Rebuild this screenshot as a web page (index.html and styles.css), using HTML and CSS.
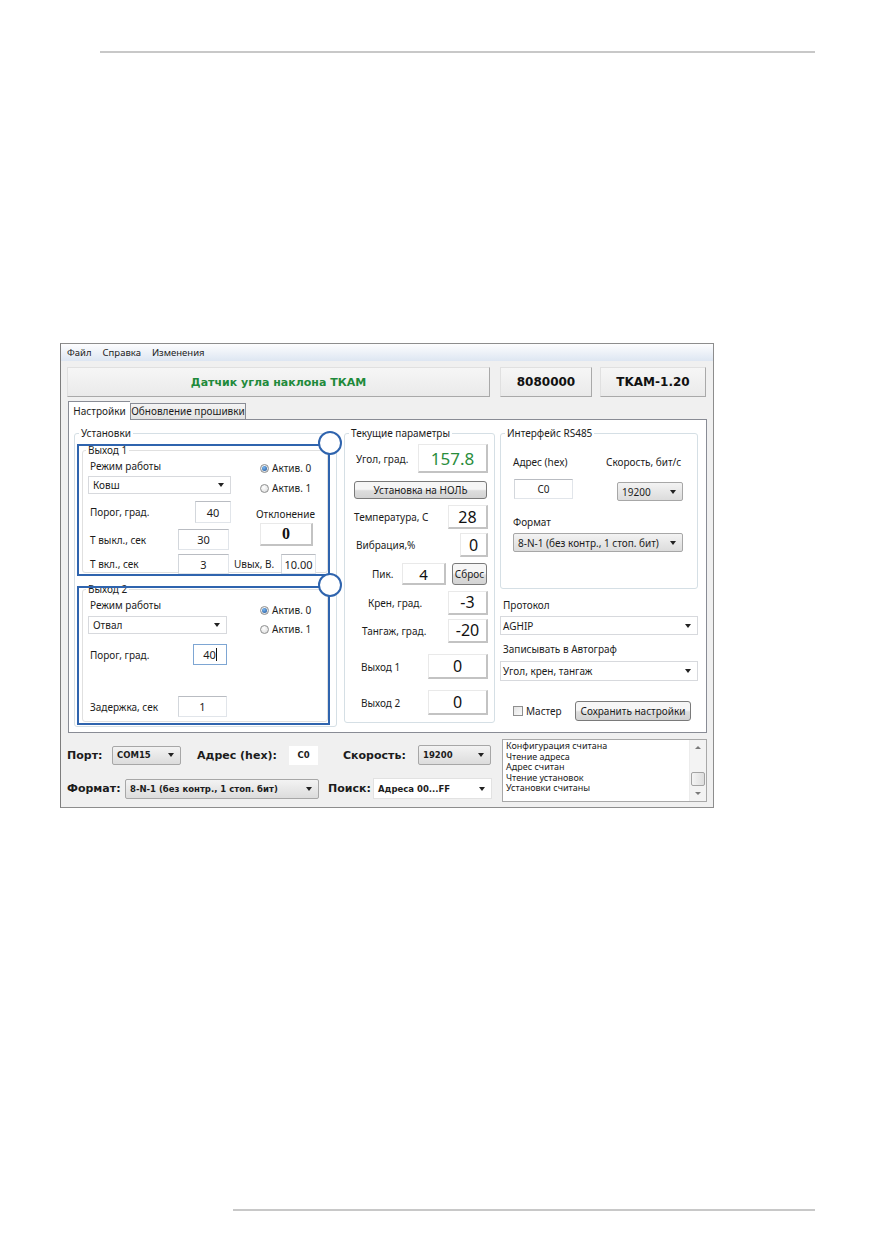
FILE: index.html
```html
<!DOCTYPE html>
<html lang="ru">
<head>
    <meta charset="UTF-8">
    <meta name="viewport" content="width=device-width, initial-scale=1.0">
    <title>Датчик угла наклона ТКАМ</title>
    <link rel="stylesheet" href="styles.css">
</head>
<body>
<div class="page">
    <div class="rule rule-top"></div>

    <div class="window">
        <div class="menubar">
            <span>Файл</span><span>Справка</span><span>Изменения</span>
        </div>

        <div class="head-row">
            <div class="hbtn hbtn-title">Датчик угла наклона ТКАМ</div>
            <div class="hbtn hbtn-serial">8080000</div>
            <div class="hbtn hbtn-version">TKAM-1.20</div>
        </div>

        <div class="tabs">
            <div class="tab active">Настройки</div>
            <div class="tab">Обновление прошивки</div>
        </div>

        <div class="tab-panel">
            <!-- Установки -->
            <div class="group g-settings">
                <span class="gtitle">Установки</span>

                <div class="out out1">
                    <span class="out-title">Выход 1</span>
                    <span class="pin"></span>
                    <div class="o-left o1-left">
                        <div class="lbl row-lbl">Режим работы</div>
                        <div class="combo o1-combo">Ковш</div>
                        <div class="frow o1-thr"><span class="lbl">Порог, град.</span><span class="edit">40</span></div>
                        <div class="frow o1-toff"><span class="lbl">Т выкл., сек</span><span class="edit">30</span></div>
                        <div class="frow o1-ton"><span class="lbl">Т вкл., сек</span><span class="edit">3</span></div>
                    </div>
                    <div class="o-right o1-right">
                        <div class="radio on"><span class="dot"></span>Актив. 0</div>
                        <div class="radio r2"><span class="dot"></span>Актив. 1</div>
                        <div class="lbl dev-lbl">Отклонение</div>
                        <div class="val dev-val">0</div>
                        <div class="frow uout"><span class="lbl">Uвых, В.</span><span class="edit">10.00</span></div>
                    </div>
                </div>

                <div class="out out2">
                    <span class="out-title">Выход 2</span>
                    <span class="pin"></span>
                    <div class="o-left o2-left">
                        <div class="lbl row-lbl">Режим работы</div>
                        <div class="combo o2-combo">Отвал</div>
                        <div class="frow o2-thr"><span class="lbl">Порог, град.</span><span class="edit focus">40<i class="caret"></i></span></div>
                        <div class="frow o2-delay"><span class="lbl">Задержка, сек</span><span class="edit">1</span></div>
                    </div>
                    <div class="o-right o2-right">
                        <div class="radio on"><span class="dot"></span>Актив. 0</div>
                        <div class="radio r2"><span class="dot"></span>Актив. 1</div>
                    </div>
                </div>
            </div>

            <!-- Текущие параметры -->
            <div class="group g-current">
                <span class="gtitle">Текущие параметры</span>
                <div class="prow p-angle"><span class="lbl">Угол, град.</span><span class="val big">157.8</span></div>
                <div class="btn zero-btn">Установка на НОЛЬ</div>
                <div class="prow p-temp"><span class="lbl">Температура, С</span><span class="val">28</span></div>
                <div class="prow p-vib"><span class="lbl">Вибрация,%</span><span class="val">0</span></div>
                <div class="prow p-peak"><span class="lbl">Пик.</span><span class="val">4</span><span class="btn reset-btn">Сброс</span></div>
                <div class="prow p-roll"><span class="lbl">Крен, град.</span><span class="val">-3</span></div>
                <div class="prow p-pitch"><span class="lbl">Тангаж, град.</span><span class="val">-20</span></div>
                <div class="prow p-out1"><span class="lbl">Выход 1</span><span class="val">0</span></div>
                <div class="prow p-out2"><span class="lbl">Выход 2</span><span class="val">0</span></div>
            </div>

            <!-- Интерфейс RS485 и протокол -->
            <div class="right-col">
                <div class="group g-rs485">
                    <span class="gtitle">Интерфейс RS485</span>
                    <div class="rs-labels"><span class="lbl">Адрес (hex)</span><span class="lbl">Скорость, бит/с</span></div>
                    <div class="rs-inputs"><span class="edit rs-addr">C0</span><span class="combo grey rs-speed">19200</span></div>
                    <div class="lbl rs-fmt-lbl">Формат</div>
                    <div class="combo grey rs-fmt">8-N-1 (без контр., 1 стоп. бит)</div>
                </div>
                <div class="lbl proto-lbl">Протокол</div>
                <div class="combo wide proto-combo">AGHIP</div>
                <div class="lbl write-lbl">Записывать в Автограф</div>
                <div class="combo wide write-combo">Угол, крен, тангаж</div>
                <div class="save-row">
                    <span class="check"></span><span class="lbl">Мастер</span>
                    <span class="btn save-btn">Сохранить настройки</span>
                </div>
            </div>
        </div>

        <div class="bottom">
            <div class="bottom-left">
                <div class="brow">
                    <span class="blbl w45">Порт:</span>
                    <span class="combo grey bold b-port">COM15</span>
                    <span class="blbl w92 ml16">Адрес (hex):</span>
                    <span class="bedit">C0</span>
                    <span class="blbl w75 ml25">Скорость:</span>
                    <span class="combo grey bold b-speed">19200</span>
                </div>
                <div class="brow">
                    <span class="blbl w58">Формат:</span>
                    <span class="combo grey bold b-fmt">8-N-1 (без контр., 1 стоп. бит)</span>
                    <span class="blbl w45 ml9">Поиск:</span>
                    <span class="combo bold b-search">Адреса 00...FF</span>
                </div>
            </div>
            <div class="log">
                <div class="log-lines">
                    <div>Конфигурация считана</div>
                    <div>Чтение адреса</div>
                    <div>Адрес считан</div>
                    <div>Чтение установок</div>
                    <div>Установки считаны</div>
                </div>
                <div class="scroll">
                    <span class="sc-btn"><i class="tri-up"></i></span>
                    <span class="sc-track"><span class="sc-thumb"></span></span>
                    <span class="sc-btn"><i class="tri-down"></i></span>
                </div>
            </div>
        </div>
    </div>

    <div class="rule rule-bottom"></div>
</div>
</body>
</html>
```

FILE: styles.css
```css
* {
    box-sizing: border-box;
}
body {
    margin: 0;
    background: #fff;
    font-family: "Noto Sans", "Open Sans", sans-serif;
    font-size: 10px;
    color: #1c1c1c;
}
.page {
    padding-top: 51px;
}
.rule {
    height: 2px;
    background: #c8c8c8;
}
.rule-top {
    margin-left: 100px;
    width: 715px;
}
.rule-bottom {
    margin-left: 233px;
    width: 582px;
    margin-top: 401px;
}

/* окно программы */
.window {
    margin: 290px 0 0 60px;
    width: 654px;
    height: 465px;
    border: 1px solid #8d8d8d;
    border-left-color: #7d7d7d;
    background: #f0f0f0;
}
.menubar {
    display: flex;
    gap: 11px;
    height: 17px;
    line-height: 17px;
    padding-left: 6px;
    font-size: 9.5px;
    background: linear-gradient(#fdfdfe, #dde6f2);
}
.head-row {
    display: flex;
    height: 30px;
    margin-top: 6px;
    padding-left: 6px;
}
.hbtn {
    display: flex;
    align-items: center;
    justify-content: center;
    height: 30px;
    border: 1px solid;
    border-color: #e0e0e0 #a9a9a9 #a9a9a9 #e0e0e0;
    background: linear-gradient(#f6f6f6, #eaeaea);
    font-family: "DejaVu Sans", sans-serif;
    font-weight: bold;
    font-size: 12px;
    color: #111;
}
.hbtn-title {
    width: 423px;
    font-size: 11px;
    color: #1f8a3b;
}
.hbtn-serial {
    width: 92px;
    margin-left: 10px;
}
.hbtn-version {
    width: 106px;
    margin-left: 8px;
}

/* вкладки */
.tabs {
    display: flex;
    align-items: flex-end;
    height: 18px;
    margin-top: 4px;
    padding-left: 7px;
}
.tab {
    width: 116px;
    height: 16px;
    line-height: 15px;
    text-align: center;
    border: 1px solid #898c95;
    border-bottom: none;
    background: linear-gradient(#f4f4f4, #e2e2e2);
}
.tab.active {
    width: 62px;
    height: 19px;
    line-height: 18px;
    margin-bottom: -1px;
    border-right: none;
    background: #fff;
    position: relative;
    z-index: 1;
}
.tab-panel {
    display: flex;
    align-items: flex-start;
    margin-left: 7px;
    width: 639px;
    height: 314px;
    padding-left: 5px;
    border: 1px solid #898c95;
    background: #fff;
}

/* группы */
.group {
    position: relative;
    margin-top: 13px;
    border: 1px solid #d5dfe5;
    border-radius: 3px;
}
.gtitle {
    position: absolute;
    top: -7px;
    left: 4px;
    padding: 0 2px;
    line-height: 13px;
    background: #fff;
}
.lbl {
    line-height: 12px;
    white-space: nowrap;
}
.g-settings {
    width: 263px;
    height: 294px;
    padding: 10px 0 0 2px;
}

/* выходы с синей рамкой */
.out {
    position: relative;
    display: flex;
    align-items: flex-start;
    width: 253px;
    padding-left: 11px;
}
.out1 {
    height: 132px;
}
.out2 {
    height: 139px;
    margin-top: 10px;
}
.out::before {
    content: "";
    position: absolute;
    left: 5px;
    right: 2px;
    top: 6px;
    bottom: 3px;
    border: 1px solid #e0e0e0;
    border-radius: 3px;
}
.out2::before {
    top: 3px;
}
.out::after {
    content: "";
    position: absolute;
    inset: 0;
    border: 2px solid #2f64ae;
    z-index: 2;
    pointer-events: none;
}
.out-title {
    position: absolute;
    left: 9px;
    top: 0;
    padding: 0 2px;
    line-height: 12px;
    background: #fff;
    z-index: 1;
}
.out2 .out-title {
    top: -3px;
}
.pin {
    position: absolute;
    top: -13px;
    right: -12px;
    width: 24px;
    height: 24px;
    border: 2px solid #2f64ae;
    border-radius: 50%;
    background: #fff;
    z-index: 3;
}
.o-left,
.o-right {
    position: relative;
    z-index: 1;
    display: flex;
    flex-direction: column;
}
.o1-left {
    width: 143px;
    margin-top: 16px;
}
.o2-left {
    width: 139px;
    margin-top: 13px;
}
.row-lbl {
    margin-left: 2px;
}
.frow {
    display: flex;
    align-items: center;
    justify-content: space-between;
}
.frow .lbl {
    margin-left: 2px;
}
.o1-combo {
    margin-top: 4px;
    height: 18px;
}
.o1-thr {
    margin-top: 7px;
    height: 22px;
}
.o1-thr .edit {
    width: 36px;
    height: 22px;
}
.o1-toff {
    margin-top: 6px;
    height: 21px;
}
.o1-toff .edit {
    width: 51px;
    height: 21px;
    margin-right: 2px;
}
.o1-ton {
    margin-top: 4px;
    height: 20px;
}
.o1-ton .edit {
    width: 51px;
    height: 20px;
    margin-right: 2px;
}
.o1-right {
    width: 83px;
    margin-left: 3px;
    margin-top: 18px;
}
.o1-right .radio {
    margin-left: 26px;
}
.o1-right .r2 {
    margin-top: 8px;
}
.dev-lbl {
    margin-top: 14px;
    margin-left: 22px;
}
.dev-val {
    margin-top: 3px;
    margin-left: 26px;
    width: 53px;
    height: 23px;
    font-family: "Liberation Serif", serif;
    font-weight: bold;
    font-size: 13px;
}
.uout {
    margin-top: 8px;
    height: 20px;
    width: 82px;
}
.uout .lbl {
    margin-left: 0;
}
.uout .edit {
    width: 35px;
    height: 20px;
}
.o2-combo {
    margin-top: 5px;
    height: 18px;
}
.o2-thr {
    margin-top: 10px;
    height: 21px;
}
.o2-thr .edit {
    width: 34px;
    height: 21px;
}
.o2-delay {
    margin-top: 31px;
    height: 21px;
}
.o2-delay .edit {
    width: 49px;
    height: 21px;
}
.o2-right {
    margin-left: 33px;
    margin-top: 18px;
}
.o2-right .r2 {
    margin-top: 7px;
}

/* элементы управления */
.edit {
    display: flex;
    align-items: center;
    justify-content: center;
    background: #fff;
    border: 1px solid;
    border-color: #b9bcc2 #e1e5ea #e1e5ea #d3d7dc;
    font-size: 11px;
}
.edit.focus {
    border-color: #7ea6d3;
}
.caret {
    display: inline-block;
    width: 1px;
    height: 13px;
    background: #111;
}
.combo {
    position: relative;
    display: flex;
    align-items: center;
    padding-left: 4px;
    background: #fff;
    border: 1px solid #d7d9dd;
    white-space: nowrap;
}
.combo::after {
    content: "";
    position: absolute;
    right: 6px;
    top: 50%;
    margin-top: -2px;
    border-left: 3px solid transparent;
    border-right: 3px solid transparent;
    border-top: 4px solid #222;
}
.combo.grey {
    background: linear-gradient(#f3f3f3, #dcdcdc);
    border-color: #a7a7a7;
    border-radius: 2px;
}
.radio {
    display: flex;
    align-items: center;
    height: 12px;
    white-space: nowrap;
}
.radio .dot {
    position: relative;
    width: 9px;
    height: 9px;
    margin-right: 3px;
    border: 1px solid #8e8f8f;
    border-radius: 50%;
    background: radial-gradient(circle at 40% 35%, #fff, #d8d8d8);
}
.radio.on .dot::after {
    content: "";
    position: absolute;
    inset: 1px;
    border-radius: 50%;
    background: radial-gradient(circle at 40% 35%, #7ab8f2, #1c4f94);
}
.btn {
    display: flex;
    align-items: center;
    justify-content: center;
    border: 1px solid #7a7a7a;
    border-radius: 3px;
    background: linear-gradient(#f6f6f6 45%, #dddddd 55%, #d3d3d3);
    white-space: nowrap;
}
.val {
    display: flex;
    align-items: center;
    justify-content: center;
    background: #fff;
    border-style: solid;
    border-width: 1px 2px 2px 1px;
    border-color: #e9e9e9 #c3c3c3 #c3c3c3 #e9e9e9;
    font-size: 16px;
    color: #111;
}
.val.big {
    font-size: 17px;
    color: #2a8d3c;
}

/* текущие параметры */
.g-current {
    display: flex;
    flex-direction: column;
    width: 151px;
    height: 290px;
    margin-left: 7px;
    padding-right: 6px;
}
.prow {
    display: flex;
    align-items: center;
    justify-content: space-between;
}
.p-angle {
    margin-top: 10px;
    height: 29px;
}
.p-angle .lbl {
    margin-left: 11px;
}
.p-angle .val {
    width: 70px;
    height: 29px;
}
.zero-btn {
    margin-top: 8px;
    margin-left: 9px;
    width: 133px;
    height: 18px;
}
.p-temp {
    margin-top: 6px;
    height: 24px;
}
.p-temp .lbl {
    margin-left: 9px;
}
.p-vib {
    margin-top: 4px;
    height: 24px;
}
.p-vib .lbl {
    margin-left: 11px;
}
.p-vib .val {
    width: 28px;
    height: 24px;
}
.p-temp .val,
.p-roll .val,
.p-pitch .val {
    width: 40px;
    height: 24px;
}
.p-peak {
    justify-content: flex-start;
    margin-top: 6px;
    height: 22px;
}
.p-peak .lbl {
    width: 30px;
    margin-left: 27px;
}
.p-peak .val {
    width: 44px;
    height: 22px;
    font-size: 15px;
}
.reset-btn {
    margin-left: 6px;
    width: 35px;
    height: 22px;
}
.p-roll {
    margin-top: 5px;
    height: 25px;
}
.p-roll .lbl {
    margin-left: 23px;
}
.p-pitch {
    margin-top: 3px;
    height: 25px;
}
.p-pitch .lbl {
    margin-left: 17px;
}
.p-out1,
.p-out2 {
    margin-top: 11px;
    height: 25px;
}
.p-out1 .lbl,
.p-out2 .lbl {
    margin-left: 16px;
}
.p-out1 .val,
.p-out2 .val {
    width: 60px;
    height: 25px;
}

/* правая колонка */
.right-col {
    display: flex;
    flex-direction: column;
    width: 198px;
    margin-left: 5px;
    margin-top: 13px;
}
.g-rs485 {
    margin-top: 0;
    width: 198px;
    height: 156px;
}
.rs-labels {
    display: flex;
    margin-top: 22px;
    padding-left: 12px;
}
.rs-labels .lbl:first-child {
    width: 93px;
}
.rs-inputs {
    display: flex;
    align-items: flex-start;
    margin-top: 11px;
    padding-left: 13px;
}
.rs-addr {
    width: 59px;
    height: 20px;
    font-size: 10px;
}
.rs-speed {
    margin-left: 44px;
    margin-top: 3px;
    width: 66px;
    height: 19px;
}
.rs-fmt-lbl {
    margin-top: 15px;
    margin-left: 12px;
}
.rs-fmt {
    margin-top: 5px;
    margin-left: 12px;
    width: 170px;
    height: 19px;
}
.proto-lbl {
    margin-top: 10px;
    margin-left: 3px;
}
.combo.wide {
    width: 198px;
    padding-left: 2px;
}
.proto-combo {
    margin-top: 5px;
    height: 19px;
}
.write-lbl {
    margin-top: 8px;
    margin-left: 3px;
}
.write-combo {
    margin-top: 6px;
    height: 20px;
}
.save-row {
    display: flex;
    align-items: center;
    margin-top: 20px;
    height: 20px;
}
.check {
    width: 10px;
    height: 10px;
    margin-left: 13px;
    margin-right: 3px;
    border: 1px solid #8f8f8f;
    background: linear-gradient(135deg, #e4e4e4, #fafafa);
}
.save-btn {
    margin-left: auto;
    margin-right: 7px;
    width: 116px;
    height: 20px;
}

/* нижняя панель */
.bottom {
    display: flex;
    margin-top: 6px;
    padding-left: 6px;
}
.bottom-left {
    width: 435px;
    padding-top: 6px;
}
.brow {
    display: flex;
    align-items: center;
    height: 20px;
}
.brow + .brow {
    margin-top: 13px;
    height: 21px;
}
.blbl {
    font-family: "DejaVu Sans", sans-serif;
    font-weight: bold;
    font-size: 11px;
    white-space: nowrap;
}
.w45 { width: 45px; }
.w58 { width: 58px; }
.w75 { width: 75px; }
.w92 { width: 92px; }
.ml9 { margin-left: 9px; }
.ml16 { margin-left: 16px; }
.ml25 { margin-left: 25px; }
.combo.bold,
.bedit {
    font-family: "DejaVu Sans", sans-serif;
    font-weight: bold;
    font-size: 8.5px;
}
.bedit {
    display: flex;
    align-items: center;
    justify-content: center;
    width: 29px;
    height: 19px;
    background: #fff;
}
.b-port {
    width: 69px;
    height: 19px;
}
.b-speed {
    width: 73px;
    height: 20px;
}
.b-fmt {
    width: 194px;
    height: 20px;
}
.b-search {
    width: 119px;
    height: 21px;
    border-color: #e2e2e2;
}
.log {
    display: flex;
    width: 205px;
    height: 63px;
    border: 1px solid #a8a8a8;
    background: #fff;
}
.log-lines {
    flex: 1;
    padding: 1px 0 0 3px;
    font-size: 9px;
    line-height: 10.6px;
}
.scroll {
    display: flex;
    flex-direction: column;
    width: 17px;
    background: #f3f3f3;
    border-left: 1px solid #ececec;
}
.sc-btn {
    display: flex;
    align-items: center;
    justify-content: center;
    height: 15px;
}
.sc-track {
    flex: 1;
}
.sc-thumb {
    display: block;
    margin: 17px 1px 0;
    height: 14px;
    border: 1px solid #a3a3a3;
    border-radius: 2px;
    background: linear-gradient(90deg, #f4f4f4, #dedede);
}
.tri-up {
    border-left: 3px solid transparent;
    border-right: 3px solid transparent;
    border-bottom: 3px solid #7a7a7a;
}
.tri-down {
    border-left: 3px solid transparent;
    border-right: 3px solid transparent;
    border-top: 3px solid #7a7a7a;
}
```
